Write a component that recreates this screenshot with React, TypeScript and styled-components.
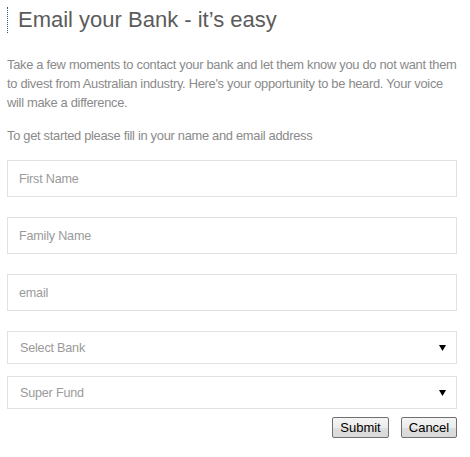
import React from "react";
import styled, { createGlobalStyle } from "styled-components";

const Global = createGlobalStyle`
  html, body { margin: 0; padding: 0; background: #fff; }
  body { font-family: "Liberation Sans", Arial, sans-serif; }
`;

const Page = styled.div`
  width: 450px;
  padding: 7px 0 0 7px;
  display: flex;
  flex-direction: column;
`;

const Title = styled.h1`
  margin: 0;
  border-left: 1px dotted #1f5f8f;
  padding-left: 10px;
  height: 26px;
  line-height: 26px;
  font-size: 22px;
  font-weight: normal;
  color: #5c5c5c;
`;

const Text = styled.p<{ $gap: number }>`
  margin: ${(p) => p.$gap}px 0 0 0;
  font-size: 12.9px;
  line-height: 19px;
  letter-spacing: -0.3px;
  white-space: nowrap;
  color: #8a8a8a;
`;

const Form = styled.form`
  display: flex;
  flex-direction: column;
  margin-top: 15px;
`;

const Field = styled.input<{ $gap: number }>`
  box-sizing: border-box;
  width: 450px;
  height: 37px;
  margin: ${(p) => p.$gap}px 0 0 0;
  padding: 0 11px;
  border: 1px solid #e2e2e2;
  outline: none;
  font-family: "Liberation Sans", Arial, sans-serif;
  font-size: 12.6px;
  letter-spacing: -0.2px;
  color: #555;
  &::placeholder { color: #9a9a9a; }
`;

const SelectBox = styled.div<{ $gap: number }>`
  box-sizing: border-box;
  width: 450px;
  height: 33px;
  margin-top: ${(p) => p.$gap}px;
  padding: 0 10px 0 12px;
  border: 1px solid #e2e2e2;
  display: flex;
  align-items: center;
  justify-content: space-between;
  font-size: 12.6px;
  letter-spacing: -0.2px;
  color: #9a9a9a;
`;

const Arrow = styled.svg`
  width: 7px;
  height: 6px;
  display: block;
`;

const Actions = styled.div`
  display: flex;
  justify-content: flex-end;
  gap: 12px;
  margin-top: 8px;
`;

const Button = styled.button<{ $w: number }>`
  box-sizing: border-box;
  width: ${(p) => p.$w}px;
  height: 21px;
  padding: 0;
  border: 1px solid #707070;
  border-radius: 2px;
  background: linear-gradient(#f4f4f4 0%, #ececec 50%, #dedede 51%, #d9d9d9 100%);
  font-family: "Liberation Sans", Arial, sans-serif;
  font-size: 13px;
  color: #000;
`;

function Select({ label, gap }: { label: string; gap: number }) {
  return (
    <SelectBox $gap={gap}>
      <span>{label}</span>
      <Arrow viewBox="0 0 7 6">
        <polygon points="0,0 7,0 3.5,6" fill="#000" />
      </Arrow>
    </SelectBox>
  );
}

export default function App() {
  return (
    <>
      <Global />
      <Page>
        <Title>Email your Bank - it’s easy</Title>
        <Text $gap={22}>
          Take a few moments to contact your bank and let them know you do not want them
          <br />
          to divest from Australian industry. Here's your opportunity to be heard. Your voice
          <br />
          will make a difference.
        </Text>
        <Text $gap={14}>To get started please fill in your name and email address</Text>
        <Form onSubmit={(e) => e.preventDefault()}>
          <Field $gap={0} placeholder="First Name" />
          <Field $gap={20} placeholder="Family Name" />
          <Field $gap={20} placeholder="email" />
          <Select label="Select Bank" gap={20} />
          <Select label="Super Fund" gap={12} />
          <Actions>
            <Button $w={57} type="submit">Submit</Button>
            <Button $w={56} type="button">Cancel</Button>
          </Actions>
        </Form>
      </Page>
    </>
  );
}
